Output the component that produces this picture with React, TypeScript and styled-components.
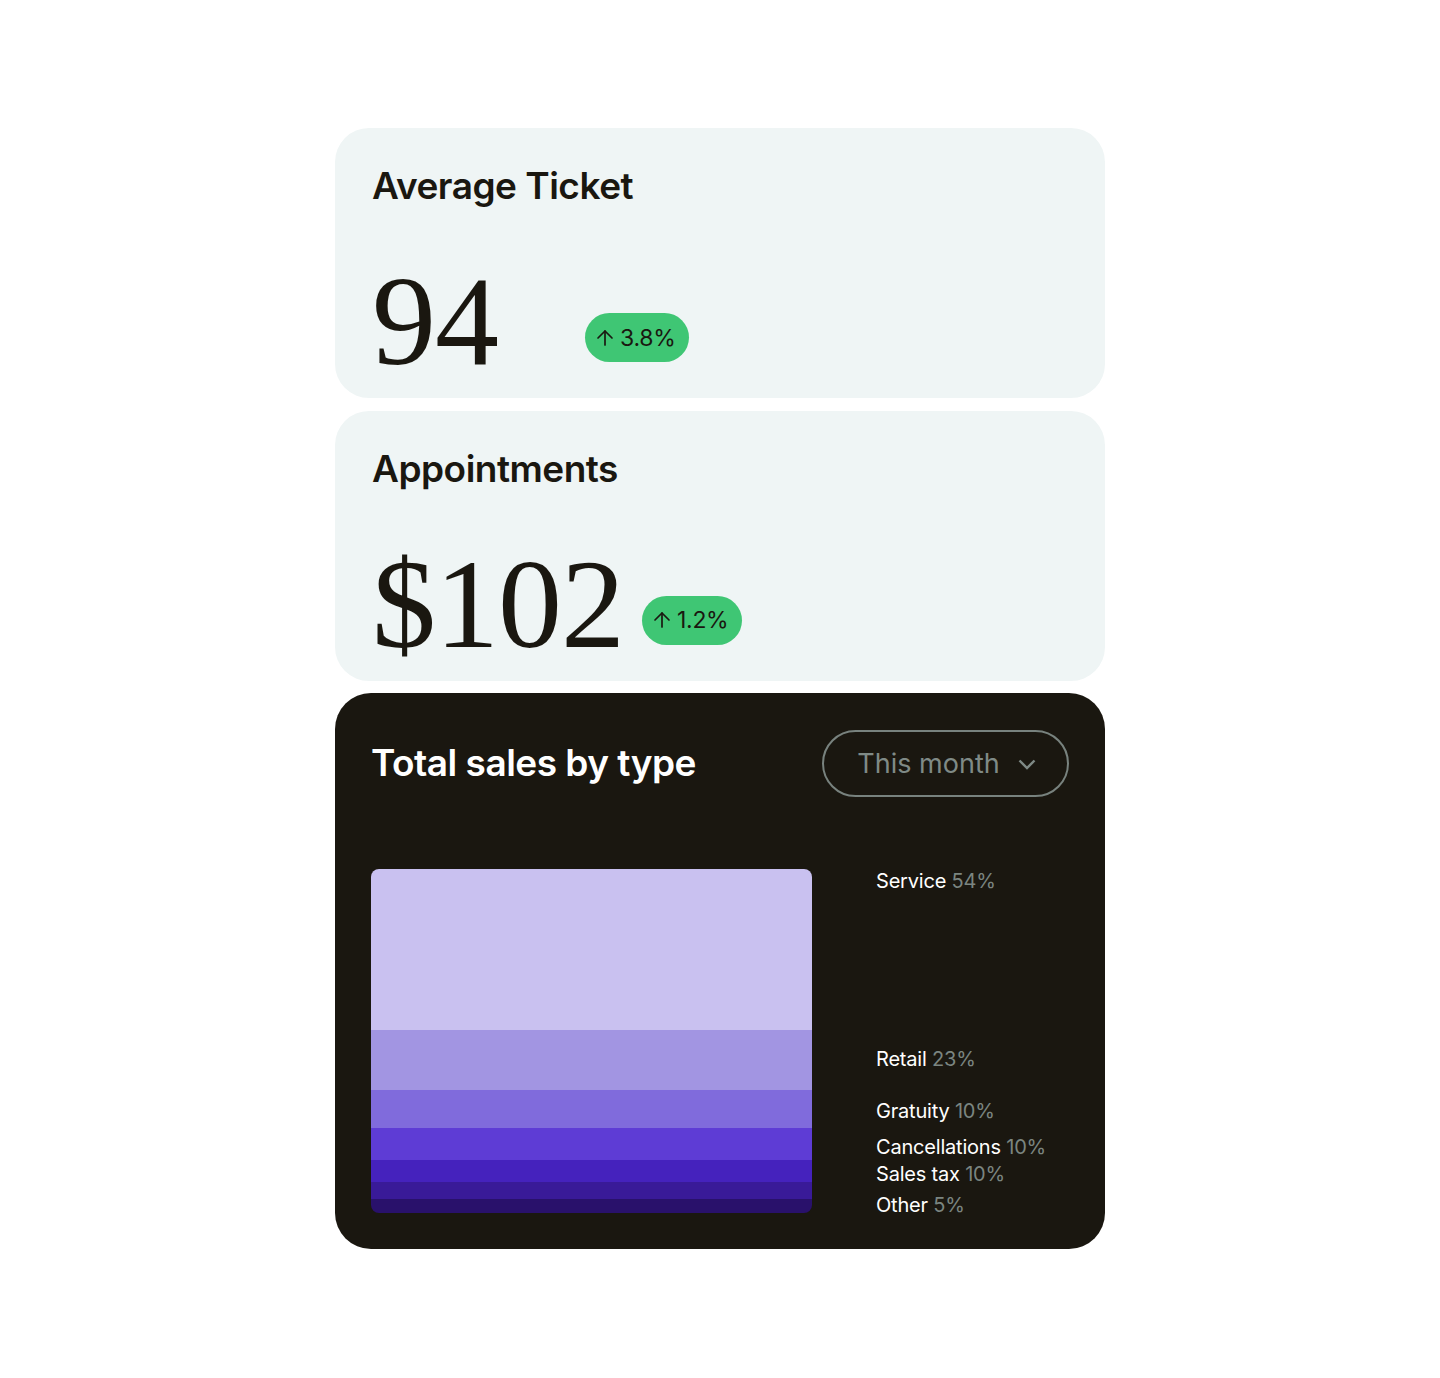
import styled, { createGlobalStyle } from 'styled-components';
import { ArrowUp } from 'lucide-react';

const GlobalStyle = createGlobalStyle`
  body {
    margin: 0;
    background: #ffffff;
    font-family: Inter, "Noto Sans", sans-serif;
    color: #1a1710;
  }
`;

const bands = [
  { color: '#c9c1f0', height: 161 },
  { color: '#a295e2', height: 60 },
  { color: '#806bdc', height: 38 },
  { color: '#5e3cd5', height: 32 },
  { color: '#4522bd', height: 22 },
  { color: '#391a98', height: 17 },
  { color: '#29116b', height: 14 },
];

const legend = [
  { label: 'Service', value: '54%', offset: 0 },
  { label: 'Retail', value: '23%', offset: 154 },
  { label: 'Gratuity', value: '10%', offset: 28 },
  { label: 'Cancellations', value: '10%', offset: 12 },
  { label: 'Sales tax', value: '10%', offset: 3 },
  { label: 'Other', value: '5%', offset: 7 },
];

function StatCard({ title, value, change, spacing }: { title: string; value: string; change: string; spacing: number }) {
  return (
    <StatBox>
      <CardTitle>{title}</CardTitle>
      <ValueRow>
        <BigNumber>{value}</BigNumber>
        <Badge $spacing={spacing}>
          <ArrowUp size={24} strokeWidth={1.7} />
          {change}
        </Badge>
      </ValueRow>
    </StatBox>
  );
}

export default function App() {
  return (
    <>
      <GlobalStyle />
      <Page>
        <Stack>
          <StatCard title="Average Ticket" value="94" change="3.8%" spacing={87} />
          <StatCard title="Appointments" value="$102" change="1.2%" spacing={18} />

          <SalesCard>
            <SalesHeader>
              <CardTitle $light>Total sales by type</CardTitle>
              <Dropdown type="button">
                This month
                <svg width="18" height="11" viewBox="0 0 18 11" fill="none">
                  <path d="M1.5 1.5 9 9l7.5-7.5" stroke="currentColor" strokeWidth="2.4" />
                </svg>
              </Dropdown>
            </SalesHeader>

            <SalesBody>
              <Chart>
                {bands.map((b) => (
                  <Band key={b.color} $color={b.color} $height={b.height} />
                ))}
              </Chart>
              <Legend>
                {legend.map((item) => (
                  <LegendItem key={item.label} $offset={item.offset}>
                    {item.label} <Percent>{item.value}</Percent>
                  </LegendItem>
                ))}
              </Legend>
            </SalesBody>
          </SalesCard>
        </Stack>
      </Page>
    </>
  );
}

const Page = styled.div`
  min-height: 1378px;
  display: flex;
  justify-content: center;
  padding-top: 128px;
  box-sizing: border-box;
`;

const Stack = styled.div`
  width: 770px;
  display: flex;
  flex-direction: column;
  gap: 12.5px;
`;

const StatBox = styled.section`
  height: 270px;
  box-sizing: border-box;
  background: #eff5f5;
  border-radius: 34px;
  padding: 36px 37px 0;
  display: flex;
  flex-direction: column;
`;

const CardTitle = styled.h2<{ $light?: boolean }>`
  margin: 0;
  font-size: 37px;
  line-height: 44px;
  font-weight: 600;
  letter-spacing: -0.5px;
  color: ${(p) => (p.$light ? '#ffffff' : '#1a1710')};
`;

const ValueRow = styled.div`
  display: flex;
  align-items: flex-end;
  margin-top: 49px;
`;

const BigNumber = styled.div`
  font-family: "Liberation Serif", "Times New Roman", serif;
  font-size: 128px;
  line-height: 1;
  letter-spacing: -1px;
  color: #1a1710;
`;

const Badge = styled.span<{ $spacing: number }>`
  margin-left: ${(p) => p.$spacing}px;
  margin-bottom: 23px;
  height: 49px;
  padding: 0 14px 0 8px;
  border-radius: 25px;
  background: #3fc674;
  display: inline-flex;
  align-items: center;
  gap: 3px;
  font-size: 23px;
  letter-spacing: -0.3px;
  color: #1a1710;
`;

const SalesCard = styled.section`
  height: 556px;
  box-sizing: border-box;
  background: #1a1710;
  border-radius: 36px;
  padding: 48px 36px 0 36px;
  display: flex;
  flex-direction: column;
`;

const SalesHeader = styled.div`
  display: flex;
  justify-content: space-between;
  align-items: flex-start;
`;

const Dropdown = styled.button`
  width: 247px;
  height: 67px;
  box-sizing: border-box;
  border: 2px solid #78827e;
  border-radius: 34px;
  background: transparent;
  color: #7f8a86;
  font-family: Inter, "Noto Sans", sans-serif;
  font-size: 27px;
  display: flex;
  align-items: center;
  justify-content: center;
  gap: 18px;
  padding: 0 0 0 2px;
  margin-top: -11px;
  cursor: pointer;

  svg {
    margin-top: 1px;
  }
`;

const SalesBody = styled.div`
  display: flex;
  margin-top: 72px;
`;

const Chart = styled.div`
  width: 441px;
  border-radius: 8px;
  overflow: hidden;
  display: flex;
  flex-direction: column;
  align-self: flex-start;
`;

const Band = styled.div<{ $color: string; $height: number }>`
  height: ${(p) => p.$height}px;
  background: ${(p) => p.$color};
`;

const Legend = styled.ul`
  list-style: none;
  margin: 0 0 0 64px;
  padding: 0;
  display: flex;
  flex-direction: column;
`;

const LegendItem = styled.li<{ $offset: number }>`
  margin-top: ${(p) => p.$offset}px;
  font-size: 20px;
  line-height: 24px;
  letter-spacing: -0.2px;
  color: #ffffff;
`;

const Percent = styled.span`
  color: #7b8580;
`;
